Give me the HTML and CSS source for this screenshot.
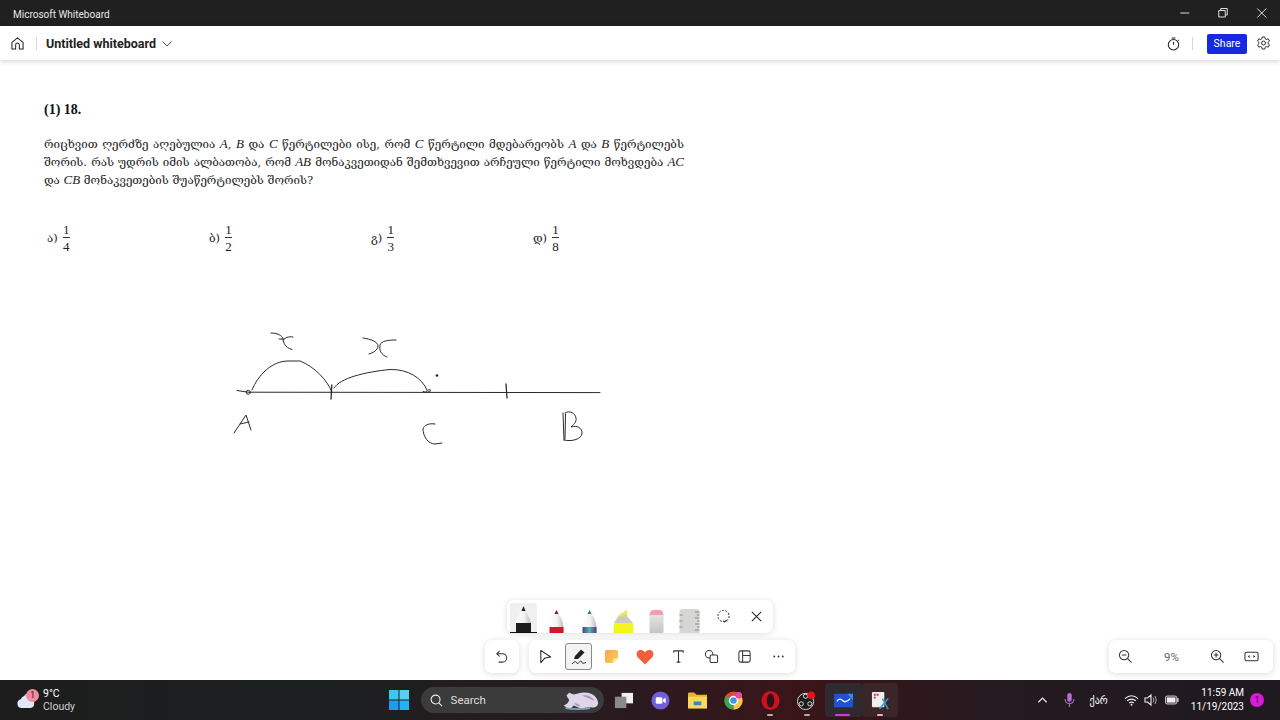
FILE: index.html
```html
<!DOCTYPE html>
<html lang="en">
<head>
    <meta charset="UTF-8">
    <title>Microsoft Whiteboard</title>
    <link rel="stylesheet" href="styles.css">
</head>
<body>
    <div class="titlebar">
        <span class="app-name">Microsoft Whiteboard</span>
        <div class="window-controls">
            <svg class="win-btn" viewBox="0 0 38 14"><path d="M15 7h9" stroke="#ddd" fill="none"/></svg>
            <svg class="win-btn" viewBox="0 0 38 14"><path d="M15.5 4.5h6.5v6.5h-6.5zM17.5 4.5v-2h6.5v6.5h-2" stroke="#ddd" fill="none"/></svg>
            <svg class="win-btn" viewBox="0 0 38 14"><path d="M15 2.5l9 9M24 2.5l-9 9" stroke="#ddd" fill="none"/></svg>
        </div>
    </div>

    <div class="appbar">
        <svg class="home-icon" viewBox="0 0 14 14"><path d="M1 13V5.8L7 1l6 4.800V13H9V8.500a2 2 0 0 0-4 0V13z" fill="none" stroke="#222" stroke-width="1.100"/></svg>
        <div class="divider"></div>
        <span class="board-name">Untitled whiteboard</span>
        <svg class="chevron" viewBox="0 0 10 6"><path d="M.5.5L5 5 9.500.5" fill="none" stroke="#555"/></svg>
        <div class="appbar-right">
            <svg class="timer-icon" viewBox="0 0 14 15"><circle cx="7" cy="8.300" r="5.600" fill="none" stroke="#222" stroke-width="1.100"/><path d="M5 1h4M7 8.300V5M12 3l.8.8" fill="none" stroke="#222" stroke-width="1.100"/></svg>
            <div class="divider"></div>
            <button class="share-btn">Share</button>
            <svg class="gear-icon" viewBox="0 0 16 16"><path d="M6.600 1h2.800l.4 2 1.300.7 1.900-.7 1.400 2.400-1.500 1.300v1.500l1.500 1.300-1.400 2.400-1.900-.7-1.300.7-.4 2H6.600l-.4-2-1.300-.7-1.900.7L1.600 9.500l1.500-1.300V6.700L1.600 5.400 3 3l1.900.7 1.300-.7z" fill="none" stroke="#222"/><circle cx="8" cy="7.500" r="2.100" fill="none" stroke="#222"/></svg>
        </div>
    </div>

    <div class="board">
        <div class="problem">
            <div class="problem-num">(1) 18.</div>
            <div class="problem-text">
                <div class="line line-full">რიცხვით ღერძზე აღებულია <i>A</i>, <i>B</i> და <i>C</i> წერტილები ისე, რომ <i>C</i> წერტილი მდებარეობს <i>A</i> და <i>B</i> წერტილებს</div>
                <div class="line line-full">შორის. რას უდრის იმის ალბათობა, რომ <i>AB</i> მონაკვეთიდან შემთხვევით არჩეული წერტილი მოხვდება <i>AC</i></div>
                <div class="line">და <i>CB</i> მონაკვეთების შუაწერტილებს შორის?</div>
            </div>
            <div class="answers">
                <div class="answer"><span>ა)</span><span class="frac"><span class="top">1</span><span>4</span></span></div>
                <div class="answer"><span>ბ)</span><span class="frac"><span class="top">1</span><span>2</span></span></div>
                <div class="answer"><span>გ)</span><span class="frac"><span class="top">1</span><span>3</span></span></div>
                <div class="answer"><span>დ)</span><span class="frac"><span class="top">1</span><span>8</span></span></div>
            </div>
        </div>

        <svg class="ink" viewBox="0 60 1280 620">
            <g fill="none" stroke="#2a2a2a" stroke-width="1" stroke-linecap="round" stroke-linejoin="round">
                <path d="M237 390.500L248 392.200L600 392.600"/>
                <circle cx="248.300" cy="392.300" r="2"/>
                <path d="M331.800 385L331 399M506 384L507 398" stroke-width="1.300"/>
                <path d="M252 390C258 375 272 361 288 361L300 361C315 367 327 380 332 392"/>
                <path d="M334 388C340 378 365 372 390 369.500C408 369 422 378 427 390"/>
                <path d="M423 391.500C426 393 430 392 431 390.500C429 389 427 390 426 392"/>
                <path d="M271 333C277 333 282 335 283 339C284 343 284 347 292 349.500M293 337C288 336 285 338 283 340M279 339L284 339"/>
                <path d="M363 338C371 339 378 342 378 346C378 350 373 353 369 354M396 340C388 340 381 341 380 345C379 350 381 355 387 357"/>
                <path d="M234 433L246 415L251 430M240 424L249 422"/>
                <path d="M435 424C429 423 424 425 423 429C423 436 428 444 435 444L442 443"/>
                <path d="M563 413L564 440M565.500 414L565 439M565 413C570 410 575 413 576 418C577 422 573 425 571 427C577 425 582 428 582 433C582 439 572 442 564 440"/>
            </g>
            <circle cx="437" cy="375.500" r="1.300" fill="#222"/>
        </svg>

        <div class="dock">
            <div class="tray">
                <div class="tray-item selected">
                    <svg viewBox="0 0 27 30">
                        <defs>
                            <linearGradient id="penBody" x1="0" y1="0" x2="1" y2="0"><stop offset="0" stop-color="#ffffff"/><stop offset=".55" stop-color="#f2f2f2"/><stop offset="1" stop-color="#bdbdbd"/></linearGradient>
                            <linearGradient id="inkBand" x1="0" y1="0" x2="1" y2="0"><stop offset="0" stop-color="#4b3f86"/><stop offset=".5" stop-color="#5ab0b0"/><stop offset="1" stop-color="#4b3f86"/></linearGradient>
                            <linearGradient id="eraserBody" x1="0" y1="0" x2="0" y2="1"><stop offset="0" stop-color="#e4e4e4"/><stop offset="1" stop-color="#c4c4c4"/></linearGradient>
                        </defs>
                        <path d="M11.500 9L13.500 4L15.500 9C18 13 20 17 21 21V30H6V21C7 17 9 13 11.500 9z" fill="url(#penBody)"/>
                        <path d="M11.500 9L13.500 4L15.500 9z" fill="#222"/>
                        <rect x="6" y="21" width="15" height="9" fill="#1d1d1d"/>
                    </svg>
                </div>
                <div class="tray-item">
                    <svg viewBox="0 0 27 30"><path d="M11.500 11L13.500 7L15.500 11C18 14 20 19 20.500 24V30H6.500V24C7 19 9 14 11.500 11z" fill="url(#penBody)"/><path d="M11.500 11L13.500 7L15.500 11z" fill="#8d1026"/><rect x="6.500" y="24" width="14" height="6" fill="#d9142f"/></svg>
                </div>
                <div class="tray-item">
                    <svg viewBox="0 0 27 30"><path d="M11.500 11L13.500 7L15.500 11C18 14 20 19 20.500 24V30H6.500V24C7 19 9 14 11.500 11z" fill="url(#penBody)"/><path d="M11.500 11L13.500 7L15.500 11z" fill="#2f7f78"/><rect x="6.500" y="24" width="14" height="6" fill="url(#inkBand)"/></svg>
                </div>
                <div class="tray-item">
                    <svg viewBox="0 0 27 30"><path d="M9 12L17 7V13L23 20H4z" fill="#c9cbc4"/><path d="M9 12L17 7V11L9 14z" fill="#f3ee3a"/><path d="M4 20H23L23.500 30H3.500z" fill="#f4f51c"/></svg>
                </div>
                <div class="tray-item">
                    <svg viewBox="0 0 27 30"><path d="M6.500 13C6.500 9 8 7 10 7H17C19 7 20.500 9 20.500 13z" fill="#f3a0ad"/><rect x="6.500" y="12" width="14" height="18" fill="url(#eraserBody)"/></svg>
                </div>
                <div class="tray-item">
                    <svg viewBox="0 0 27 30"><path d="M3.500 9Q3.500 6 7 6H20Q23.500 6 23.500 9V30H3.500z" fill="#d6d6d4"/><path d="M19 9h4.500M21 12h2.500M19 15h4.500M21 18h2.500M19 21h4.500M21 24h2.500M19 27h4.500M3.500 12h3M3.500 18h3M3.500 24h3" stroke="#8a8a8a"/></svg>
                </div>
                <div class="tray-item plain">
                    <svg class="tool-svg" viewBox="0 0 16 16"><circle cx="8" cy="7.500" r="6" fill="none" stroke="#222" stroke-dasharray="2.200 1.500"/><path d="M7.500 12.500l2 1.500 1-2 1.500 1" fill="none" stroke="#222"/></svg>
                </div>
                <div class="tray-item plain">
                    <svg class="tool-svg" viewBox="0 0 16 16"><path d="M3 3l10 10M13 3L3 13" stroke="#222" stroke-width="1.100"/></svg>
                </div>
            </div>
            <div class="dock-row">
                <div class="card undo-card">
                    <svg class="tool-svg" viewBox="0 0 16 16"><path d="M6 2L3 5l3 3M3 5h6a4 4 0 0 1 0 9H5" fill="none" stroke="#333" stroke-width="1.100"/></svg>
                </div>
                <div class="card tools-card">
                    <div class="tool"><svg class="tool-svg" viewBox="0 0 16 16"><path d="M3 1.500L13.500 8.500 7.500 9.500 3 14.500z" fill="none" stroke="#222" stroke-width="1.100" stroke-linejoin="round"/></svg></div>
                    <div class="tool active"><svg class="tool-svg" viewBox="0 0 18 18"><path d="M4 11l1-3 6-6.500 3.500 3L8 11z" fill="#222"/><path d="M2 16c2-2.500 4-3 4.500-1.500s1.500 1 3-.5 2-1 2.500.5 2 .5 4 0" fill="none" stroke="#222"/></svg></div>
                    <div class="tool"><svg class="tool-svg" viewBox="0 0 16 16"><defs><linearGradient id="noteFill" x1="0" y1="0" x2="1" y2="1"><stop offset="0" stop-color="#f8a456"/><stop offset="1" stop-color="#fbd341"/></linearGradient></defs><path d="M1 3q0-2 2-2h10q2 0 2 2v6.500L9.500 15H3q-2 0-2-2z" fill="url(#noteFill)"/><path d="M15 9.500L9.500 15l.5-4.500z" fill="#fdf0a0"/></svg></div>
                    <div class="tool"><svg class="tool-svg heart" viewBox="0 0 18 16"><path d="M9 15.500L1.800 8.300C-.5 5.800.5 1 4.700 1 6.800 1 8.200 2 9 3.500 9.800 2 11.200 1 13.300 1c4.200 0 5.200 4.800 2.900 7.300z" fill="#ef5f3c"/></svg></div>
                    <div class="tool"><svg class="tool-svg" viewBox="0 0 16 16"><path d="M3 4V2h10v2M8 2v12M6 14h4" fill="none" stroke="#333" stroke-width="1.100"/></svg></div>
                    <div class="tool"><svg class="tool-svg" viewBox="0 0 16 16"><circle cx="5.500" cy="5.500" r="4" fill="none" stroke="#333" stroke-width="1.100"/><rect x="6.500" y="6.500" width="8" height="8" rx="1.500" fill="#fff" stroke="#333" stroke-width="1.100"/></svg></div>
                    <div class="tool"><svg class="tool-svg" viewBox="0 0 16 16"><rect x="2" y="2" width="12" height="12" rx="2" fill="none" stroke="#333" stroke-width="1.100"/><path d="M6 2v12M6 7h8" fill="none" stroke="#333" stroke-width="1.100"/></svg></div>
                    <div class="tool"><svg class="tool-svg" viewBox="0 0 16 16"><circle cx="3.500" cy="8" r="1" fill="#333"/><circle cx="8" cy="8" r="1" fill="#333"/><circle cx="12.500" cy="8" r="1" fill="#333"/></svg></div>
                </div>
            </div>
        </div>

        <div class="card zoom-card">
            <svg class="tool-svg" viewBox="0 0 16 16"><circle cx="6.500" cy="6.500" r="5" fill="none" stroke="#333" stroke-width="1.100"/><path d="M4 6.500h5M10 10l4.500 4.500" stroke="#333" stroke-width="1.100"/></svg>
            <span class="zoom-val">9%</span>
            <svg class="tool-svg" viewBox="0 0 16 16"><circle cx="6.500" cy="6.500" r="5" fill="none" stroke="#333" stroke-width="1.100"/><path d="M4 6.500h5M6.500 4v5M10 10l4.500 4.500" stroke="#333" stroke-width="1.100"/></svg>
            <svg class="tool-svg fit-icon" viewBox="0 0 16 16"><rect x="1" y="3.500" width="14" height="9" rx="1.500" fill="none" stroke="#333" stroke-width="1.100"/><path d="M6 6.500L4 8l2 1.500zM10 6.500L12 8l-2 1.500z" fill="#333"/></svg>
        </div>
    </div>

    <div class="taskbar">
        <div class="weather">
            <svg class="weather-icon" viewBox="0 0 24 20"><ellipse cx="15" cy="8" rx="7" ry="6" fill="#c3c8f0"/><path d="M6 19a5 5 0 0 1-1-9.800A6 6 0 0 1 16 9a4.800 4.800 0 0 1 4 5 5 5 0 0 1-4 5z" fill="#e2e8fb"/></svg>
            <span class="weather-badge">1</span>
            <div class="weather-text">
                <div>9°C</div>
                <div class="dim">Cloudy</div>
            </div>
        </div>

        <div class="task-center">
            <div class="task-icon">
                <svg class="win-logo" viewBox="0 0 20 20"><rect width="9.500" height="9.500" fill="#3fc4f4"/><rect x="10.500" width="9.500" height="9.500" fill="#52d2f8"/><rect y="10.500" width="9.500" height="9.500" fill="#1b9fe2"/><rect x="10.500" y="10.500" width="9.500" height="9.500" fill="#29b0ee"/></svg>
            </div>
            <div class="search-pill">
                <svg class="search-icon" viewBox="0 0 14 14"><circle cx="6" cy="6" r="4.800" fill="none" stroke="#eee" stroke-width="1.200"/><path d="M9.500 9.500L13 13" stroke="#eee" stroke-width="1.200"/></svg>
                <span>Search</span>
                <svg class="bear" viewBox="0 0 42 22"><path d="M2 17q5-2 6-6L5 6l3-3 5 2 8-2q13-1 17 6 3 5 1 8-2 3-7 2l-12 1-7-3-3 3q-4 1-8-3z" fill="#e0d6ea"/><path d="M22 6q10-1 14 6-6-3-14-6zM13 14q5 1 8 4-6 0-8-4z" fill="#a998b8"/><path d="M4 20q14 2 27 0" stroke="#7fa6bb" stroke-width="1.800" fill="none"/></svg>
            </div>
            <div class="task-icon">
                <svg viewBox="0 0 20 20" class="app-svg"><rect x="8" y="2" width="12" height="11" fill="#f0f0f0"/><rect x="1" y="6" width="12" height="12" fill="#8a8a8a"/></svg>
            </div>
            <div class="task-icon">
                <svg viewBox="0 0 20 20" class="app-svg"><circle cx="10" cy="10" r="9.500" fill="#6f5fd8"/><rect x="5" y="6.500" width="7" height="7" rx="1.500" fill="#fff"/><path d="M12.500 9l3-2v6l-3-2z" fill="#fff"/></svg>
            </div>
            <div class="task-icon">
                <svg viewBox="0 0 20 20" class="app-svg"><path d="M0 3q0-1.500 1.500-1.500h5L9 4h11v14H0z" fill="#e8b32e"/><rect y="6" width="20" height="12.500" fill="#fbd75a"/><rect x="6" y="11" width="8" height="4" fill="#2c8cc4"/></svg>
            </div>
            <div class="task-icon">
                <svg viewBox="0 0 20 20" class="app-svg"><circle cx="10" cy="10" r="9.500" fill="#e3483c"/><path d="M10 10L18.200 5.200A9.500 9.500 0 0 1 10 19.500z" fill="#f7c93c"/><path d="M10 10v9.500A9.500 9.500 0 0 1 1.800 5.200z" fill="#34a853"/><circle cx="10" cy="10" r="4.200" fill="#4a90e8" stroke="#fff" stroke-width="1.500"/><circle cx="15.500" cy="4.500" r="3.500" fill="#e648a8"/></svg>
            </div>
            <div class="task-icon running">
                <svg viewBox="0 0 20 20" class="app-svg"><ellipse cx="10" cy="10" rx="9.500" ry="10" fill="#d0101e"/><ellipse cx="10" cy="10" rx="4" ry="7.500" fill="#2a1216"/></svg>
            </div>
            <div class="task-icon running">
                <svg viewBox="0 0 20 20" class="app-svg"><circle cx="9" cy="11" r="8.500" fill="#1c1c1c" stroke="#ddd"/><circle cx="9" cy="5.500" r="2.200" fill="none" stroke="#ddd"/><circle cx="4.500" cy="13.500" r="2.200" fill="none" stroke="#ddd"/><circle cx="13.500" cy="13.500" r="2.200" fill="none" stroke="#ddd"/><circle cx="15" cy="4.500" r="4" fill="#e8121e"/></svg>
            </div>
            <div class="task-icon current">
                <svg viewBox="0 0 20 20" class="app-svg"><path d="M1 3h18a1 1 0 0 1 1 1v13H0V4a1 1 0 0 1 1-1z" fill="#1f50d8"/><path d="M14 3h6v7z" fill="#2e8df0"/><path d="M3 11c2-3 4-3 6-1s4 2 8-2" fill="none" stroke="#fff" stroke-width="1.400"/></svg>
            </div>
            <div class="task-icon snip">
                <svg viewBox="0 0 20 20" class="app-svg"><rect x="1" y="1" width="13" height="16" rx="1" fill="#f2eeee"/><path d="M3 3h2v2H3zM6 3h2v2H6zM3 6h2v2H3z" fill="#d03040"/><path d="M9 19l9-11M12 8l6 11" stroke="#3a9ac8" stroke-width="1.600"/></svg>
            </div>
        </div>

        <div class="tray-area">
            <svg class="tray-svg chevron-up" viewBox="0 0 12 8"><path d="M1.500 6.500L6 2l4.500 4.500" fill="none" stroke="#eee" stroke-width="1.300"/></svg>
            <svg class="tray-svg mic" viewBox="0 0 12 18"><rect x="3.500" y="1" width="5" height="10" rx="2.500" fill="#b56fd0"/><path d="M1 8a5 5 0 0 0 10 0M6 13v4" fill="none" stroke="#b56fd0" stroke-width="1.200"/></svg>
            <span class="lang">ქარ</span>
            <svg class="tray-svg wifi" viewBox="0 0 16 12"><path d="M1 4.500q7-6 14 0M3.200 7q4.800-4 9.600 0M5.500 9.300q2.500-2 5 0" fill="none" stroke="#eee" stroke-width="1.200"/><circle cx="8" cy="11" r="1" fill="#eee"/></svg>
            <svg class="tray-svg speaker" viewBox="0 0 14 12"><path d="M1 4h2.500L7 1v10L3.500 8H1z" fill="none" stroke="#eee" stroke-width="1.100"/><path d="M9 3.500q1.800 2.500 0 5M11 2q2.500 4 0 8" fill="none" stroke="#aaa"/></svg>
            <svg class="tray-svg battery" viewBox="0 0 16 10"><rect x=".5" y=".5" width="13" height="9" rx="2" fill="none" stroke="#eee"/><rect x="2" y="2" width="10" height="6" fill="#eee"/><rect x="14" y="3" width="1.500" height="4" fill="#eee"/></svg>
            <div class="clock">
                <div>11:59 AM</div>
                <div>11/19/2023</div>
            </div>
            <span class="notify">1</span>
        </div>
    </div>
</body>
</html>
```

FILE: styles.css
```css
* {
    box-sizing: border-box;
}

body {
    margin: 0;
    width: 1280px;
    height: 720px;
    overflow: hidden;
    display: flex;
    flex-direction: column;
    font-family: Roboto, "Open Sans", sans-serif;
    background: white;
}

svg {
    display: block;
}

/* title bar */
.titlebar {
    height: 26px;
    background: #202020;
    color: #e8e8e8;
    display: flex;
    align-items: center;
    justify-content: space-between;
    padding-left: 13px;
    flex: none;
}

.app-name {
    font-size: 10px;
    padding-top: 2px;
}

.window-controls {
    display: flex;
}

.win-btn {
    width: 38.5px;
    height: 14px;
}

/* app bar */
.appbar {
    height: 34px;
    flex: none;
    background: white;
    display: flex;
    align-items: center;
    padding: 1px 0 0 11px;
    box-shadow: 0 1px 5px rgba(0, 0, 0, 0.2);
    position: relative;
    z-index: 2;
}

.home-icon {
    width: 13px;
    height: 13px;
}

.divider {
    width: 1px;
    height: 13px;
    background: #d8d8d8;
    margin-left: 12px;
}

.board-name {
    font-size: 12.5px;
    font-weight: 700;
    color: #222;
    margin-left: 9px;
}

.chevron {
    width: 10px;
    height: 6px;
    margin-left: 6px;
}

.appbar-right {
    margin-left: auto;
    display: flex;
    align-items: center;
    padding-right: 9px;
}

.timer-icon {
    width: 13px;
    height: 14px;
}

.appbar-right .divider {
    margin-left: 12px;
}

.share-btn {
    width: 40px;
    height: 20px;
    margin-left: 14px;
    border: none;
    border-radius: 2px;
    background: #1529e0;
    color: white;
    font-family: inherit;
    font-size: 10.5px;
    padding: 0;
}

.gear-icon {
    width: 15px;
    height: 15px;
    margin-left: 9px;
}

/* board */
.board {
    flex: 1;
    position: relative;
    background: white;
}

.problem {
    padding: 42px 0 0 44px;
    font-family: "DejaVu Serif", "Liberation Serif", serif;
    color: #222;
}

.problem-num {
    font-family: "Liberation Serif", serif;
    font-weight: 700;
    font-size: 14px;
    line-height: 16px;
    color: #111;
}

.problem-text {
    margin-top: 17px;
    width: 640px;
    font-size: 11.55px;
    line-height: 18px;
}

.line {
    white-space: nowrap;
    height: 18px;
}

.line-full {
    text-align: justify;
    text-align-last: justify;
    white-space: normal;
}

.line i {
    font-family: "Liberation Serif", serif;
    font-size: 13px;
    line-height: 1;
}

.answers {
    display: grid;
    grid-template-columns: repeat(4, 162px);
    margin-top: 33px;
    margin-left: 3px;
}

.answer {
    display: flex;
    align-items: center;
    gap: 5px;
    font-size: 11.5px;
}

.frac {
    display: flex;
    flex-direction: column;
    align-items: center;
    font-family: "Liberation Serif", serif;
    font-size: 13px;
    line-height: 15px;
    width: 7px;
}

.frac .top {
    border-bottom: 1px solid #333;
    width: 7px;
    text-align: center;
    margin-bottom: 1px;
}

.ink {
    position: absolute;
    left: 0;
    top: 0;
    width: 1280px;
    height: 620px;
    pointer-events: none;
}

/* floating tools */
.dock {
    position: absolute;
    left: 485px;
    top: 540px;
    display: flex;
    flex-direction: column;
    gap: 7px;
}

.card,
.tray {
    background: white;
    border-radius: 7px;
    box-shadow: 0 1px 6px rgba(0, 0, 0, 0.14);
}

.tray {
    display: flex;
    width: 266px;
    height: 33px;
    margin-left: 22px;
}

.tray-item {
    width: 33.25px;
    height: 33px;
    display: flex;
    align-items: flex-end;
    justify-content: center;
    flex: none;
}

.tray-item svg {
    width: 27px;
    height: 30px;
}

.tray-item.selected {
    background: #f0f0f0;
    border-bottom: 1px solid #111;
    border-radius: 2px 2px 0 0;
    width: 27px;
    height: 30px;
    margin: 3px 3px 0;
}

.tray-item.plain {
    align-items: center;
    padding-left: 1px;
}

.tray-item .tool-svg {
    width: 15px;
    height: 15px;
}

.tool-svg {
    width: 15px;
    height: 15px;
    flex: none;
}

.dock-row {
    display: flex;
    gap: 10px;
}

.undo-card {
    width: 34px;
    height: 33px;
    display: flex;
    align-items: center;
    justify-content: center;
    padding-right: 1px;
}

.tools-card {
    width: 266px;
    height: 33px;
    display: flex;
    align-items: center;
}

.tool {
    width: 33.25px;
    height: 33px;
    display: flex;
    align-items: center;
    justify-content: center;
    flex: none;
}

.tool.active .tool-svg {
    width: 18px;
    height: 18px;
}

.tool.active {
    width: 27px;
    height: 27px;
    margin: 0 3px;
    background: #f3f3f3;
    border: 1px solid #8a8a8a;
    border-radius: 3px;
}

.heart {
    width: 18px;
    height: 16px;
}

.zoom-card {
    position: absolute;
    left: 1109px;
    top: 580px;
    width: 164px;
    height: 33px;
    display: flex;
    align-items: center;
    padding-left: 9px;
}

.zoom-val {
    width: 77px;
    text-align: center;
    font-size: 11.5px;
    color: #666;
}

.fit-icon {
    margin-left: 19px;
}

/* taskbar */
.taskbar {
    height: 40px;
    flex: none;
    display: grid;
    grid-template-columns: 381px 1fr auto;
    align-items: center;
    color: white;
    background: linear-gradient(90deg, #1d1d1d 0%, #1c1f20 25%, #2a1a20 50%, #3a1518 62%, #241a20 78%, #1f1a20 100%);
}

.weather {
    display: flex;
    align-items: center;
    padding-left: 16px;
    position: relative;
}

.weather-icon {
    width: 22px;
    height: 18px;
}

.weather-badge {
    position: absolute;
    left: 26px;
    top: 2px;
    width: 13px;
    height: 13px;
    border-radius: 50%;
    background: #f28ca0;
    color: #3a1a22;
    font-size: 9px;
    line-height: 13px;
    text-align: center;
}

.weather-text {
    margin-left: 5px;
    font-size: 10.5px;
    line-height: 13px;
}

.dim {
    color: #cfcfcf;
}

.task-center {
    display: flex;
    align-items: center;
}

.task-icon {
    width: 36.6px;
    height: 34px;
    border-radius: 4px;
    display: flex;
    align-items: center;
    justify-content: center;
    flex: none;
    position: relative;
}

.win-logo {
    width: 20px;
    height: 20px;
}

.app-svg {
    width: 19px;
    height: 19px;
}

.running::after,
.current::after,
.snip::after {
    content: "";
    position: absolute;
    bottom: 1px;
    left: 15px;
    width: 6px;
    height: 2px;
    border-radius: 1px;
    background: #b8a8a8;
}

.current {
    background: #2f2a30;
}

.current::after {
    left: 10px;
    width: 15px;
    background: #d63ad6;
}

.snip {
    background: #3a2528;
}

.snip::after {
    background: #eeb0c0;
}

.search-pill {
    width: 183px;
    height: 26px;
    margin: 0 2px 0 3px;
    border-radius: 13px;
    background: #3b3b3b;
    display: flex;
    align-items: center;
    padding-left: 9px;
    font-size: 11.5px;
    color: #ddd;
    flex: none;
}

.search-icon {
    width: 13px;
    height: 13px;
    margin-right: 8px;
}

.bear {
    width: 40px;
    height: 20px;
    margin-left: auto;
    margin-right: 3px;
}

.tray-area {
    display: flex;
    align-items: center;
    padding-right: 16px;
}

.tray-svg {
    flex: none;
}

.chevron-up {
    width: 11px;
    height: 8px;
}

.mic {
    width: 11px;
    height: 16px;
    margin-left: 16px;
}

.lang {
    font-family: "DejaVu Sans", sans-serif;
    font-size: 10px;
    margin-left: 15px;
}

.wifi {
    width: 15px;
    height: 12px;
    margin-left: 16px;
}

.speaker {
    width: 14px;
    height: 12px;
    margin-left: 5px;
}

.battery {
    width: 14px;
    height: 10px;
    margin-left: 7px;
}

.clock {
    font-size: 10px;
    line-height: 14px;
    text-align: right;
    margin-left: 12px;
}

.notify {
    width: 14px;
    height: 14px;
    margin-left: 6px;
    border-radius: 50%;
    background: #d81bd8;
    color: #2a0a2a;
    font-size: 9px;
    line-height: 14px;
    text-align: center;
}
```
